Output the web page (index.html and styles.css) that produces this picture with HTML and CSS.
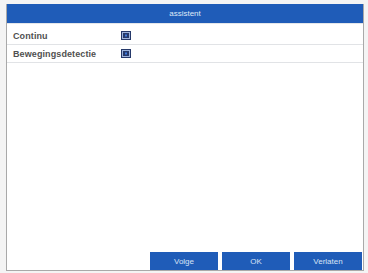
FILE: index.html
```html
<!DOCTYPE html>
<html>

<head>
    <title>assistent</title>
    <link rel="stylesheet" href="styles.css">
</head>

<body>
    <div class="window">
        <div class="title">assistent</div>
        <div class="list">
            <div class="row">
                <span class="label">Continu</span>
                <svg class="check" width="10" height="9" viewBox="0 0 10 9">
                    <rect x="0" y="0" width="10" height="9" fill="#26396a"/>
                    <rect x="1.5" y="1.5" width="7" height="6" fill="none" stroke="#9fb4dc" stroke-width="1"/>
                    <rect x="4" y="3.5" width="2" height="2" fill="#3f7be0"/>
                </svg>
            </div>
            <div class="row">
                <span class="label">Bewegingsdetectie</span>
                <svg class="check" width="10" height="9" viewBox="0 0 10 9">
                    <rect x="0" y="0" width="10" height="9" fill="#26396a"/>
                    <rect x="1.5" y="1.5" width="7" height="6" fill="none" stroke="#9fb4dc" stroke-width="1"/>
                    <rect x="4" y="3.5" width="2" height="2" fill="#3f7be0"/>
                </svg>
            </div>
        </div>
        <div class="footer">
            <button class="btn">Volge</button>
            <button class="btn">OK</button>
            <button class="btn">Verlaten</button>
        </div>
    </div>
</body>

</html>
```

FILE: styles.css
```css
body {
    margin: 0;
    background: #f4f4f4;
    font-family: "Liberation Sans", Arial, sans-serif;
}

.window {
    margin: 4px 4px 1px 6px;
    height: 266px;
    display: flex;
    flex-direction: column;
    background: #fff;
    border: 1px solid #a9a9a9;
    border-top: none;
}

.title {
    height: 19px;
    line-height: 19px;
    background: #1f5cb8;
    color: #dfe8f7;
    font-size: 8px;
    text-align: center;
}

.list {
    flex: 1;
    padding-top: 3px;
    border-top: 1px solid #e3e6ea;
}

.row {
    display: flex;
    align-items: center;
    height: 17px;
    border-bottom: 1px solid #e1e3e6;
    padding-left: 6px;
}

.label {
    width: 108px;
    font-size: 9px;
    font-weight: bold;
    color: #505050;
    letter-spacing: 0.1px;
}

.footer {
    display: flex;
    justify-content: flex-end;
    gap: 4px;
    padding-right: 1px;
}

.btn {
    width: 68px;
    height: 18px;
    padding: 0;
    border: none;
    background: #1f5cb8;
    color: #d6e2f5;
    font-family: "Liberation Sans", Arial, sans-serif;
    font-size: 8px;
}
```
